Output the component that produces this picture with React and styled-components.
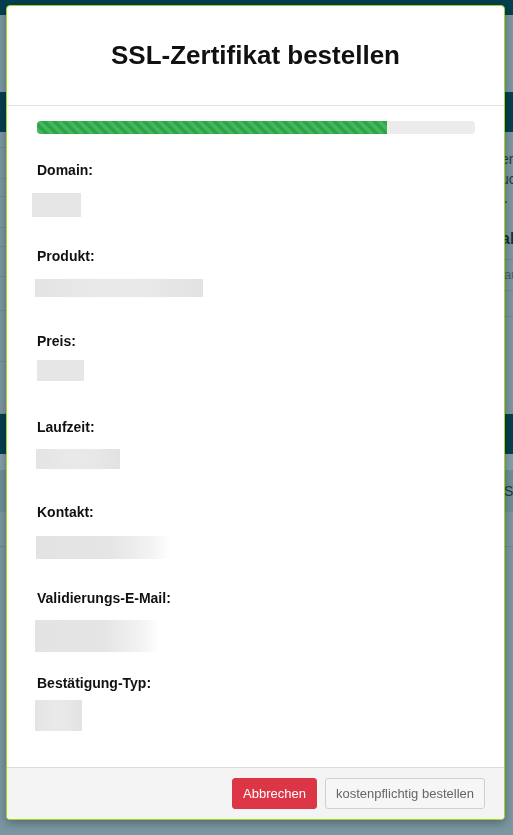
import React from 'react';
import styled, { createGlobalStyle } from 'styled-components';

const GlobalStyle = createGlobalStyle`
  html, body {
    margin: 0;
    padding: 0;
  }
  body {
    font-family: "Liberation Sans", Arial, sans-serif;
    background: #7a96a0;
    overflow: hidden;
  }
`;

// page behind the dialog, already dimmed by the backdrop
const Page = styled.div`
  display: flex;
  flex-direction: column;
  height: 100vh;
  background: #7a96a0;
`;

const Band = styled.div`
  flex: none;
  height: ${p => p.h}px;
  background: ${p => p.bg || '#7a96a0'};
  border-bottom: ${p => (p.line ? '1px solid #6b8791' : 'none')};
  box-sizing: border-box;
  display: flex;
  align-items: center;
  justify-content: flex-start;
  padding-left: ${p => p.textAt || 0}px;
  font-size: 14px;
  color: #1c3944;
  white-space: nowrap;
  overflow: hidden;
`;

const Columns = styled.div`
  flex: none;
  display: flex;
  height: 282px;
`;

const LeftCol = styled.div`
  width: 200px;
  display: flex;
  flex-direction: column;
`;

const LeftRow = styled.div`
  flex: none;
  height: ${p => p.h}px;
  border-bottom: 1px solid #6f8b95;
  box-sizing: border-box;
`;

const RightCol = styled.div`
  flex: 1;
  display: flex;
  flex-direction: column;
  padding-left: 301px;
  padding-top: 18px;
  overflow: hidden;
`;

const PageText = styled.div`
  font-size: 14px;
  line-height: 19.5px;
  color: #1e3a45;
  white-space: nowrap;
`;

const PageHeading = styled.div`
  margin-top: 20px;
  font-size: 16px;
  font-weight: bold;
  line-height: 20px;
  color: #12303a;
  white-space: nowrap;
`;

const TableRow = styled.div`
  height: ${p => p.h}px;
  margin-top: ${p => p.gap || 0}px;
  border-top: 1px solid #6d8a94;
  display: flex;
  align-items: center;
  font-size: 13px;
  color: #4b5f66;
  white-space: nowrap;
`;

// dialog
const Dialog = styled.div`
  position: fixed;
  top: 5px;
  left: 6px;
  width: 499px;
  height: 815px;
  box-sizing: border-box;
  border: 1px solid #a4d61a;
  border-radius: 4px;
  background: #fff;
  display: flex;
  flex-direction: column;
  overflow: hidden;
  box-shadow: 0 3px 9px rgba(0, 0, 0, 0.3);
`;

const Header = styled.div`
  flex: none;
  height: 100px;
  box-sizing: border-box;
  border-bottom: 1px solid #e2e2e2;
  display: flex;
  align-items: center;
  justify-content: center;
`;

const Title = styled.h1`
  margin: 0;
  font-size: 26px;
  font-weight: bold;
  color: #111;
`;

const Body = styled.div`
  flex: 1;
  padding: 15px 29px 0 30px;
`;

const Progress = styled.div`
  height: 13px;
  border-radius: 4px;
  background: #ececec;
  overflow: hidden;
  display: flex;
`;

const ProgressBar = styled.div`
  width: ${p => p.value}%;
  background-color: #28a745;
  background-image: linear-gradient(
    45deg,
    rgba(255, 255, 255, 0.15) 25%,
    transparent 25%,
    transparent 50%,
    rgba(255, 255, 255, 0.15) 50%,
    rgba(255, 255, 255, 0.15) 75%,
    transparent 75%,
    transparent
  );
  background-size: 10px 10px;
`;

const Fields = styled.div`
  margin-top: 26px;
  display: grid;
  grid-auto-rows: 85.5px;
`;

const Field = styled.div`
  display: flex;
  flex-direction: column;
  align-items: flex-start;
`;

const Label = styled.div`
  font-size: 14px;
  font-weight: bold;
  line-height: 20px;
  color: #111;
`;

// blurred / redacted values
const Redacted = styled.div`
  width: ${p => p.w}px;
  height: ${p => p.h}px;
  margin-top: ${p => p.top}px;
  margin-left: ${p => p.shift}px;
  background: ${p =>
    p.fade
      ? 'linear-gradient(90deg, #e3e3e3 0%, #e5e5e5 55%, #f3f3f3 85%, #fff 100%)'
      : p.soft
      ? 'linear-gradient(90deg, #e4e4e4 0%, #e9e9e9 40%, #e8e8e8 70%, #e2e2e2 100%)'
      : '#e6e6e6'};
`;

const Footer = styled.div`
  flex: none;
  height: 52px;
  box-sizing: border-box;
  border-top: 1px solid #dcdcdc;
  background: #f4f4f4;
  padding: 0 19px;
  display: flex;
  align-items: center;
  justify-content: flex-end;
  gap: 8px;
`;

const Button = styled.button`
  height: 31px;
  padding: 0 10px;
  border-radius: 3px;
  font-family: "Liberation Sans", Arial, sans-serif;
  font-size: 13px;
  cursor: pointer;
  border: 1px solid ${p => (p.danger ? '#dc3545' : '#d0d0d0')};
  background: ${p => (p.danger ? '#dc3545' : '#f6f6f6')};
  color: ${p => (p.danger ? '#fff' : '#666')};
`;

const fields = [
  { label: 'Domain:', w: 49, h: 24, top: 13, shift: -5 },
  { label: 'Produkt:', w: 168, h: 18, top: 13.5, shift: -2, soft: true },
  { label: 'Preis:', w: 47, h: 21, top: 9, shift: 0 },
  { label: 'Laufzeit:', w: 84, h: 20, top: 12.5, shift: -1, soft: true },
  { label: 'Kontakt:', w: 135, h: 23, top: 14, shift: -1, fade: true },
  { label: 'Validierungs-E-Mail:', w: 125, h: 32, top: 12.5, shift: -2, fade: true },
  { label: 'Bestätigung-Typ:', w: 47, h: 31, top: 7, shift: -2, soft: true },
];

const leftRows = [16, 31, 18, 31, 19, 30, 34, 51, 52];

export default function App() {
  return (
    <>
      <GlobalStyle />
      <Page>
        <Band h={15} bg="#063f4f" />
        <Band h={77} />
        <Band h={40} bg="#063f4f" />
        <Columns>
          <LeftCol>
            {leftRows.map((h, i) => (
              <LeftRow key={i} h={h} />
            ))}
          </LeftCol>
          <RightCol>
            <PageText>erfolgreich</PageText>
            <PageText>ucht werden</PageText>
            <PageText>l.</PageText>
            <PageHeading>alle Zertifikate</PageHeading>
            <TableRow h={30} gap={10}>laufend</TableRow>
            <TableRow h={25} />
            <TableRow h={40} />
          </RightCol>
        </Columns>
        <Band h={40} bg="#063f4f" />
        <Band h={16} bg="#829ea7" />
        <Band h={42} bg="#6c8e98" textAt={504}>
          STATUS
        </Band>
        <Band h={35} line />
      </Page>

      <Dialog>
        <Header>
          <Title>SSL-Zertifikat bestellen</Title>
        </Header>
        <Body>
          <Progress>
            <ProgressBar value={80} />
          </Progress>
          <Fields>
            {fields.map(f => (
              <Field key={f.label}>
                <Label>{f.label}</Label>
                <Redacted w={f.w} h={f.h} top={f.top} shift={f.shift} fade={f.fade} soft={f.soft} />
              </Field>
            ))}
          </Fields>
        </Body>
        <Footer>
          <Button danger>Abbrechen</Button>
          <Button>kostenpflichtig bestellen</Button>
        </Footer>
      </Dialog>
    </>
  );
}
